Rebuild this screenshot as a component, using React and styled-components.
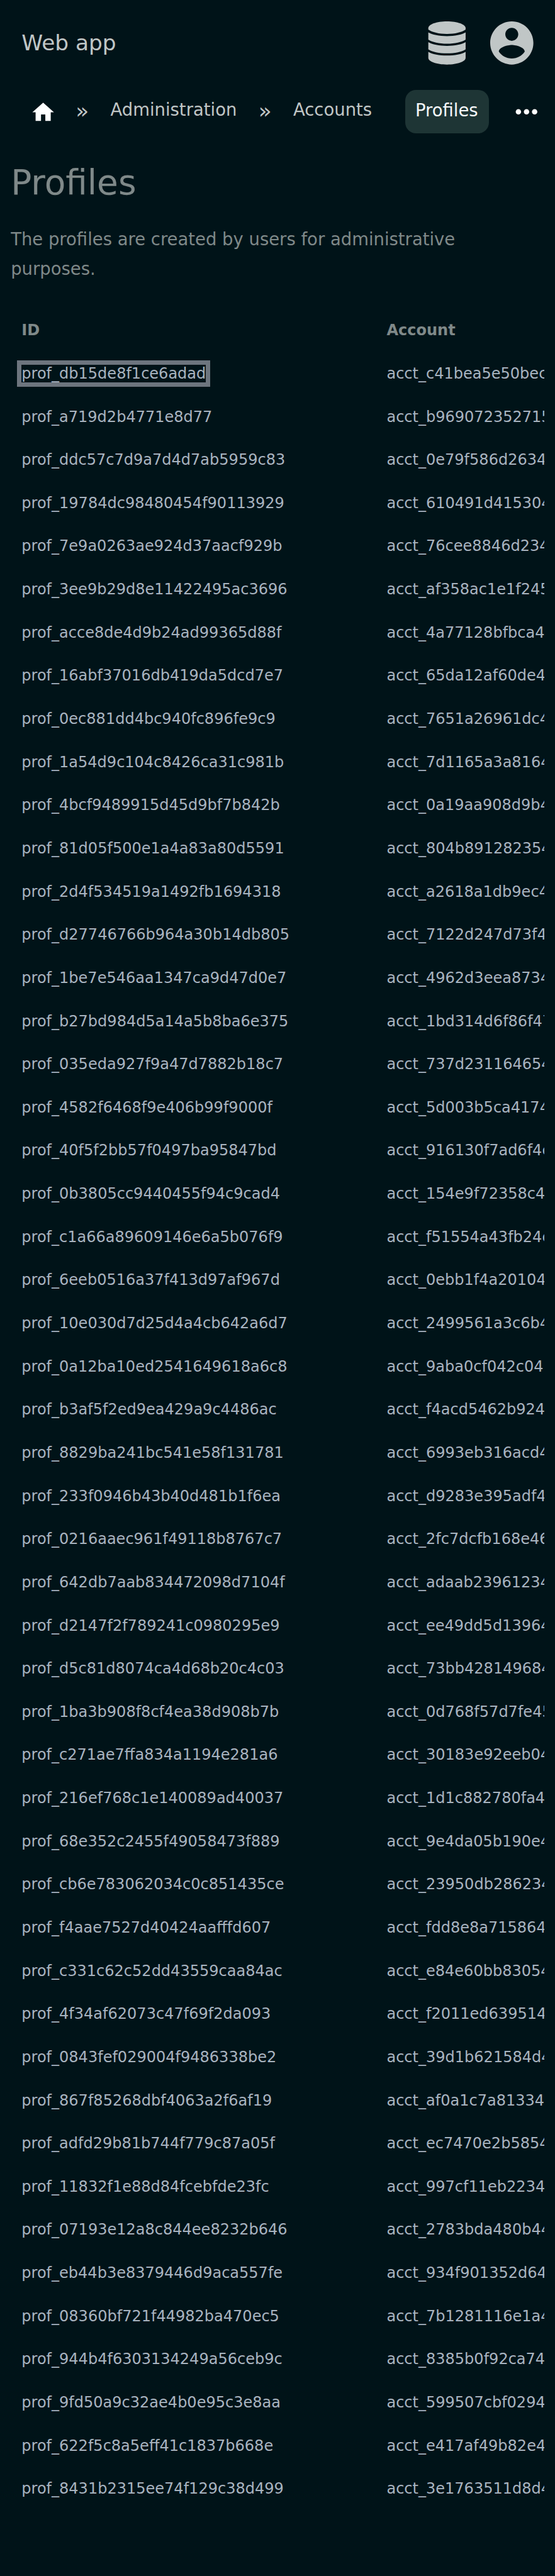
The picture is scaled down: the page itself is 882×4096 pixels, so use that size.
import React from "react";
import styled, { createGlobalStyle } from "styled-components";

const GlobalStyle = createGlobalStyle`
  html {
    font-size: 34.328px;
    background: #001318;
  }
  body {
    margin: 0;
    font-family: "DejaVu Sans", sans-serif;
    color: #7f8989;
    overflow-x: hidden;
  }
  *, *::before, *::after {
    box-sizing: border-box;
  }
`;

const Page = styled.div`
  min-height: 100vh;
`;

const Header = styled.header`
  display: flex;
  align-items: center;
  justify-content: space-between;
  height: 4rem;
  padding: 0 1rem;
  color: #c0c6c6;
`;

const Brand = styled.a`
  font-size: 1rem;
  line-height: 1.5rem;
`;

const HeaderActions = styled.div`
  display: flex;
  gap: 1rem;
`;

const Icon = styled.svg`
  display: block;
  flex: none;
  width: ${(p) => p.$size}rem;
  height: ${(p) => p.$size}rem;
  fill: currentColor;
`;

const Nav = styled.nav`
  display: flex;
  align-items: center;
  height: 2rem;
  margin-top: 0.18rem;
  padding-left: 1.4rem;
  color: #c0c6c6;
  white-space: nowrap;
`;

const HomeLink = styled.a`
  margin: 0.04rem 0.9rem 0 0;
  color: #fff;
`;

const Separator = styled.span`
  margin-right: 1rem;
  padding-bottom: 0.07rem;
  font-size: 1rem;
  line-height: 1.5rem;
`;

const Crumb = styled.a`
  margin-right: ${(p) => (p.$last ? 1.545 : 1)}rem;
  padding-bottom: 0.16rem;
  font-size: 0.8rem;
  line-height: 1.2rem;
`;

const CurrentPage = styled.a`
  display: flex;
  align-items: center;
  width: 3.875rem;
  height: 2rem;
  margin-right: 1rem;
  padding: 0 0 0.16rem 0.46rem;
  border-radius: 0.5rem;
  background: #1e3535;
  color: #f7f9fc;
  font-size: 0.8rem;
`;

const MoreButton = styled.a`
  color: #fff;
`;

const Main = styled.main`
  padding: 0 0.5rem;
`;

const Title = styled.h1`
  margin: 1.27rem 0 0.994rem;
  font-size: 1.6rem;
  font-weight: 400;
  line-height: 2rem;
`;

const Description = styled.p`
  margin: 0 0 1.14rem;
  font-size: 0.8rem;
  line-height: 1.36rem;
`;

const Table = styled.div`
  overflow: hidden;
  font-size: 0.7rem;
`;

const Row = styled.div`
  display: grid;
  grid-template-columns: 16.9rem 16.9rem;
  align-items: center;
  height: 2rem;
  padding-left: 0.5rem;
  white-space: nowrap;
  color: #a9b4c0;
`;

const HeadRow = styled(Row)`
  color: #7f8989;
  font-weight: 700;
`;

const ProfileLink = styled.a`
  justify-self: start;
  outline: ${(p) => (p.$focused ? "0.205rem solid #6d757e" : "none")};
`;

const profiles = [
  ["prof_db15de8f1ce6adad", "acct_c41bea5e50bec"],
  ["prof_a719d2b4771e8d77", "acct_b969072352715"],
  ["prof_ddc57c7d9a7d4d7ab5959c83", "acct_0e79f586d2634"],
  ["prof_19784dc98480454f90113929", "acct_610491d415304"],
  ["prof_7e9a0263ae924d37aacf929b", "acct_76cee8846d234"],
  ["prof_3ee9b29d8e11422495ac3696", "acct_af358ac1e1f245"],
  ["prof_acce8de4d9b24ad99365d88f", "acct_4a77128bfbca4"],
  ["prof_16abf37016db419da5dcd7e7", "acct_65da12af60de4"],
  ["prof_0ec881dd4bc940fc896fe9c9", "acct_7651a26961dc4"],
  ["prof_1a54d9c104c8426ca31c981b", "acct_7d1165a3a8164"],
  ["prof_4bcf9489915d45d9bf7b842b", "acct_0a19aa908d9b4"],
  ["prof_81d05f500e1a4a83a80d5591", "acct_804b891282354"],
  ["prof_2d4f534519a1492fb1694318", "acct_a2618a1db9ec4"],
  ["prof_d27746766b964a30b14db805", "acct_7122d247d73f4"],
  ["prof_1be7e546aa1347ca9d47d0e7", "acct_4962d3eea8734"],
  ["prof_b27bd984d5a14a5b8ba6e375", "acct_1bd314d6f86f47"],
  ["prof_035eda927f9a47d7882b18c7", "acct_737d231164654"],
  ["prof_4582f6468f9e406b99f9000f", "acct_5d003b5ca4174"],
  ["prof_40f5f2bb57f0497ba95847bd", "acct_916130f7ad6f4c"],
  ["prof_0b3805cc9440455f94c9cad4", "acct_154e9f72358c4"],
  ["prof_c1a66a89609146e6a5b076f9", "acct_f51554a43fb24c"],
  ["prof_6eeb0516a37f413d97af967d", "acct_0ebb1f4a20104"],
  ["prof_10e030d7d25d4a4cb642a6d7", "acct_2499561a3c6b4"],
  ["prof_0a12ba10ed2541649618a6c8", "acct_9aba0cf042c04"],
  ["prof_b3af5f2ed9ea429a9c4486ac", "acct_f4acd5462b924"],
  ["prof_8829ba241bc541e58f131781", "acct_6993eb316acd4"],
  ["prof_233f0946b43b40d481b1f6ea", "acct_d9283e395adf4"],
  ["prof_0216aaec961f49118b8767c7", "acct_2fc7dcfb168e46"],
  ["prof_642db7aab834472098d7104f", "acct_adaab23961234"],
  ["prof_d2147f2f789241c0980295e9", "acct_ee49dd5d13964"],
  ["prof_d5c81d8074ca4d68b20c4c03", "acct_73bb428149684"],
  ["prof_1ba3b908f8cf4ea38d908b7b", "acct_0d768f57d7fe45"],
  ["prof_c271ae7ffa834a1194e281a6", "acct_30183e92eeb04"],
  ["prof_216ef768c1e140089ad40037", "acct_1d1c882780fa4"],
  ["prof_68e352c2455f49058473f889", "acct_9e4da05b190e4"],
  ["prof_cb6e783062034c0c851435ce", "acct_23950db286234"],
  ["prof_f4aae7527d40424aafffd607", "acct_fdd8e8a715864"],
  ["prof_c331c62c52dd43559caa84ac", "acct_e84e60bb83054"],
  ["prof_4f34af62073c47f69f2da093", "acct_f2011ed639514"],
  ["prof_0843fef029004f9486338be2", "acct_39d1b621584d4"],
  ["prof_867f85268dbf4063a2f6af19", "acct_af0a1c7a81334"],
  ["prof_adfd29b81b744f779c87a05f", "acct_ec7470e2b5854"],
  ["prof_11832f1e88d84fcebfde23fc", "acct_997cf11eb2234"],
  ["prof_07193e12a8c844ee8232b646", "acct_2783bda480b44"],
  ["prof_eb44b3e8379446d9aca557fe", "acct_934f901352d64"],
  ["prof_08360bf721f44982ba470ec5", "acct_7b1281116e1a4"],
  ["prof_944b4f6303134249a56ceb9c", "acct_8385b0f92ca74"],
  ["prof_9fd50a9c32ae4b0e95c3e8aa", "acct_599507cbf0294"],
  ["prof_622f5c8a5eff41c1837b668e", "acct_e417af49b82e4"],
  ["prof_8431b2315ee74f129c38d499", "acct_3e1763511d8d4"],
];

const DatabaseIcon = () => (
  <Icon $size={2} viewBox="0 0 336 336">
    <path d="M23 52C23 23 88 0 168 0s145 23 145 52v12C284 85 230 98 168 98S52 85 23 64z" />
    <path d="M23 86c29 18 84 29 145 29s116-11 145-29v56c-29 20-84 32-145 32S52 162 23 142z" />
    <path d="M23 162c29 18 84 29 145 29s116-11 145-29v56c-29 20-84 31-145 31S52 238 23 218z" />
    <path d="M23 237c29 18 84 29 145 29s116-11 145-29v47c0 29-65 52-145 52S23 313 23 284z" />
  </Icon>
);

const AccountIcon = () => (
  <Icon $size={2} viewBox="2 2 20 20">
    <path d="M12 2C6.48 2 2 6.48 2 12s4.48 10 10 10 10-4.48 10-10S17.52 2 12 2zm0 3c1.66 0 3 1.34 3 3s-1.34 3-3 3-3-1.34-3-3 1.34-3 3-3zm0 14.2c-2.5 0-4.71-1.28-6-3.22.03-1.99 4-3.08 6-3.08 1.99 0 5.97 1.09 6 3.08-1.29 1.94-3.5 3.22-6 3.22z" />
  </Icon>
);

export default function App() {
  return (
    <Page>
      <GlobalStyle />
      <Header>
        <Brand>Web app</Brand>
        <HeaderActions>
          <DatabaseIcon />
          <AccountIcon />
        </HeaderActions>
      </Header>
      <Nav>
        <HomeLink>
          <Icon $size={1.2} viewBox="0 0 24 24">
            <path d="M10 20v-6h4v6h5v-8h3L12 3 2 12h3v8z" />
          </Icon>
        </HomeLink>
        <Separator>»</Separator>
        <Crumb>Administration</Crumb>
        <Separator>»</Separator>
        <Crumb $last>Accounts</Crumb>
        <CurrentPage>Profiles</CurrentPage>
        <MoreButton>
          <Icon $size={1.5} viewBox="0 0 24 24">
            <circle cx="6" cy="12" r="2" />
            <circle cx="12" cy="12" r="2" />
            <circle cx="18" cy="12" r="2" />
          </Icon>
        </MoreButton>
      </Nav>
      <Main>
        <Title>Profiles</Title>
        <Description>
          The profiles are created by users for administrative purposes.
        </Description>
        <Table>
          <HeadRow>
            <span>ID</span>
            <span>Account</span>
          </HeadRow>
          {profiles.map(([id, account], i) => (
            <Row key={id}>
              <ProfileLink $focused={i === 0}>{id}</ProfileLink>
              <span>{account}</span>
            </Row>
          ))}
        </Table>
      </Main>
    </Page>
  );
}
